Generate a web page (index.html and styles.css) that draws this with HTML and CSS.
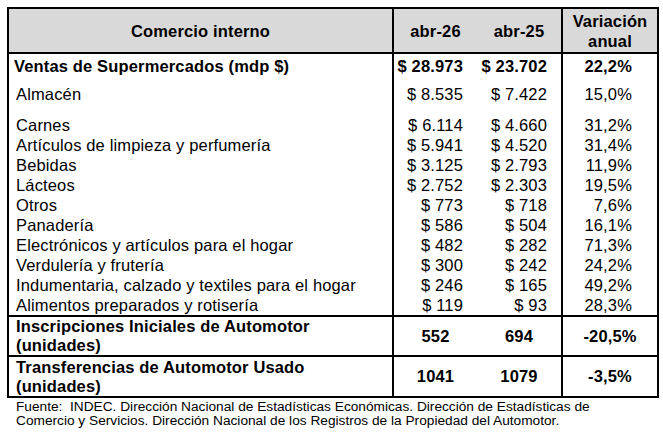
FILE: index.html
```html
<!DOCTYPE html>
<html lang="es">
<head>
<meta charset="utf-8">
<title>Comercio interno</title>
<link rel="stylesheet" href="styles.css">
</head>
<body>
<div class="wrap">
<table class="tbl">
  <colgroup>
    <col class="c-label">
    <col class="c-a">
    <col class="c-b">
    <col class="c-v">
  </colgroup>
  <thead>
    <tr class="head">
      <th class="lab sep">Comercio interno</th>
      <th>abr-26</th>
      <th class="sep">abr-25</th>
      <th>Variación<br>anual</th>
    </tr>
  </thead>
  <tbody>
    <tr class="total">
      <td class="lab sep">Ventas de Supermercados (mdp $)</td>
      <td class="num">$ 28.973</td>
      <td class="num sep">$ 23.702</td>
      <td class="pct">22,2%</td>
    </tr>
    <tr class="first">
      <td class="lab sep">Almacén</td>
      <td class="num">$ 8.535</td>
      <td class="num sep">$ 7.422</td>
      <td class="pct">15,0%</td>
    </tr>
    <tr class="item">
      <td class="lab sep">Carnes</td>
      <td class="num">$ 6.114</td>
      <td class="num sep">$ 4.660</td>
      <td class="pct">31,2%</td>
    </tr>
    <tr class="item">
      <td class="lab sep">Artículos de limpieza y perfumería</td>
      <td class="num">$ 5.941</td>
      <td class="num sep">$ 4.520</td>
      <td class="pct">31,4%</td>
    </tr>
    <tr class="item">
      <td class="lab sep">Bebidas</td>
      <td class="num">$ 3.125</td>
      <td class="num sep">$ 2.793</td>
      <td class="pct">11,9%</td>
    </tr>
    <tr class="item">
      <td class="lab sep">Lácteos</td>
      <td class="num">$ 2.752</td>
      <td class="num sep">$ 2.303</td>
      <td class="pct">19,5%</td>
    </tr>
    <tr class="item">
      <td class="lab sep">Otros</td>
      <td class="num">$ 773</td>
      <td class="num sep">$ 718</td>
      <td class="pct">7,6%</td>
    </tr>
    <tr class="item">
      <td class="lab sep">Panadería</td>
      <td class="num">$ 586</td>
      <td class="num sep">$ 504</td>
      <td class="pct">16,1%</td>
    </tr>
    <tr class="item">
      <td class="lab sep">Electrónicos y artículos para el hogar</td>
      <td class="num">$ 482</td>
      <td class="num sep">$ 282</td>
      <td class="pct">71,3%</td>
    </tr>
    <tr class="item">
      <td class="lab sep">Verdulería y frutería</td>
      <td class="num">$ 300</td>
      <td class="num sep">$ 242</td>
      <td class="pct">24,2%</td>
    </tr>
    <tr class="item">
      <td class="lab sep">Indumentaria, calzado y textiles para el hogar</td>
      <td class="num">$ 246</td>
      <td class="num sep">$ 165</td>
      <td class="pct">49,2%</td>
    </tr>
    <tr class="item last">
      <td class="lab sep">Alimentos preparados y rotisería</td>
      <td class="num">$ 119</td>
      <td class="num sep">$ 93</td>
      <td class="pct">28,3%</td>
    </tr>
    <tr class="block line">
      <td class="lab sep">Inscripciones Iniciales de Automotor<br>(unidades)</td>
      <td class="ctr">552</td>
      <td class="ctr sep">694</td>
      <td class="ctr">-20,5%</td>
    </tr>
    <tr class="block">
      <td class="lab sep">Transferencias de Automotor Usado<br>(unidades)</td>
      <td class="ctr">1041</td>
      <td class="ctr sep">1079</td>
      <td class="ctr">-3,5%</td>
    </tr>
  </tbody>
</table>
<p class="note">Fuente:&nbsp; INDEC. Dirección Nacional de Estadísticas Económicas. Dirección de Estadísticas de<br>Comercio y Servicios. Dirección Nacional de los Registros de la Propiedad del Automotor.</p>
</div>
</body>
</html>
```

FILE: styles.css
```css
html, body {
  margin: 0;
  padding: 0;
  background: #ffffff;
}

body {
  font-family: "Liberation Sans", Arial, sans-serif;
  color: #000000;
}

.wrap {
  padding: 7px 0 0 7px;
}

.tbl {
  border-collapse: separate;
  border-spacing: 0;
  table-layout: fixed;
  width: 652px;
  border: 2px solid #000000;
  font-size: 16.5px;
  letter-spacing: 0.15px;
}

.c-label { width: 385px; }
.c-a { width: 83px; }
.c-b { width: 86px; }
.c-v { width: 94px; }

.tbl th,
.tbl td {
  padding: 0;
  box-sizing: border-box;
  white-space: nowrap;
  vertical-align: middle;
}

.tbl .sep {
  border-right: 2px solid #000000;
}

.head th {
  background: #d9d9d9;
  height: 45px;
  border-bottom: 2px solid #000000;
  font-weight: bold;
  text-align: center;
  line-height: 20px;
}

.lab {
  text-align: left;
  padding-left: 7px !important;
}

.head .lab {
  text-align: center;
  padding-left: 0 !important;
}

.total td {
  font-weight: bold;
  height: 27px;
  line-height: 20px;
  padding-bottom: 3px;
}

.total .lab {
  padding-left: 5px !important;
}

.first td {
  height: 34px;
  line-height: 20px;
  padding-top: 1px;
  padding-bottom: 9px;
}

.item td {
  height: 20px;
  line-height: 20px;
}

.num {
  text-align: right;
}

.tbl td.num {
  padding-right: 14px;
}

.tbl td.pct {
  text-align: right;
  padding-right: 25px;
}

.last td {
  border-bottom: 2px solid #000000;
}

.block td {
  height: 39px;
  line-height: 19px;
  font-weight: bold;
}

.block.line td {
  border-bottom: 2px solid #000000;
}

.ctr {
  text-align: center;
}

.note {
  margin: 2px 0 0 9px;
  font-size: 13.7px;
  line-height: 14px;
  white-space: nowrap;
}
```
